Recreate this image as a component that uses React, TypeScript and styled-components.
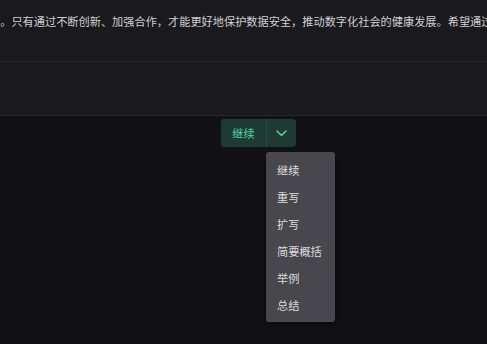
import { createGlobalStyle } from "styled-components";
import styled from "styled-components";

const GlobalStyle = createGlobalStyle`
  html, body {
    margin: 0;
    padding: 0;
    background: #121116;
    overflow: hidden;
  }
  body {
    font-family: "Noto Sans CJK SC", "Noto Sans", sans-serif;
  }
`;

const Page = styled.div`
  width: 487px;
  height: 344px;
  background: #121116;
  overflow: hidden;
`;

const Article = styled.div`
  height: 61px;
  background: #1a191e;
  border-bottom: 1px solid #27262c;
  overflow: hidden;
`;

const Paragraph = styled.p`
  margin: 0 0 0 -11px;
  padding-top: 13px;
  white-space: nowrap;
  font-size: 11.2px;
  line-height: 16px;
  color: #cfcfd2;
`;

const InputArea = styled.div`
  height: 53px;
  background: #1a191e;
  border-bottom: 1px solid #27262c;
`;

const ActionRow = styled.div`
  display: flex;
  padding: 3px 0 0 221px;
`;

const SplitButton = styled.div`
  position: relative;
  display: flex;
  height: 28px;
  border-radius: 3px;
  background: #1e3a33;
`;

const MainButton = styled.button`
  width: 46px;
  border: none;
  background: transparent;
  color: #55cfa2;
  font-family: inherit;
  font-size: 11.2px;
  padding: 0;
  border-right: 1px solid #2c4c43;
  cursor: pointer;
`;

const ToggleButton = styled.button`
  width: 29px;
  display: flex;
  align-items: center;
  justify-content: center;
  border: none;
  background: transparent;
  padding: 0;
  cursor: pointer;
`;

const Menu = styled.ul`
  position: absolute;
  top: 33px;
  left: 45px;
  width: 69px;
  margin: 0;
  padding: 4px 0;
  list-style: none;
  background: #48474d;
  border-radius: 3px;
  box-shadow: 0 3px 10px rgba(0, 0, 0, 0.45);
`;

const MenuItem = styled.li`
  height: 27px;
  display: flex;
  align-items: center;
  padding-left: 11px;
  font-size: 11.2px;
  color: #dcdcdf;
  white-space: nowrap;
`;

const items = ["继续", "重写", "扩写", "简要概括", "举例", "总结"];

export default function App() {
  return (
    <Page>
      <GlobalStyle />
      <Article>
        <Paragraph>
          新。只有通过不断创新、加强合作，才能更好地保护数据安全，推动数字化社会的健康发展。希望通过
        </Paragraph>
      </Article>
      <InputArea />
      <ActionRow>
        <SplitButton>
          <MainButton>继续</MainButton>
          <ToggleButton>
            <svg width="11" height="7" viewBox="0 0 11 7" fill="none">
              <path d="M1 1l4.5 4.5L10 1" stroke="#55cfa2" strokeWidth="1.5" strokeLinecap="round" strokeLinejoin="round" />
            </svg>
          </ToggleButton>
          <Menu>
            {items.map((t) => (
              <MenuItem key={t}>{t}</MenuItem>
            ))}
          </Menu>
        </SplitButton>
      </ActionRow>
    </Page>
  );
}
